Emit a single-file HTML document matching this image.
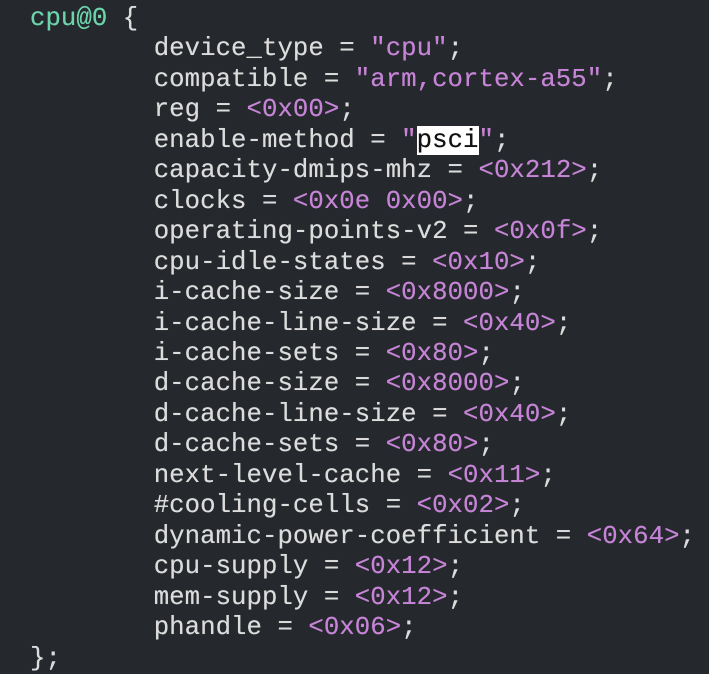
<!DOCTYPE html>
<html><head><meta charset="utf-8"><style>
html,body{margin:0;padding:0;background:#25282c;width:709px;height:673px;overflow:hidden}
pre{margin:0;position:absolute;left:30px;top:4px;font-family:"Liberation Mono","DejaVu Sans Mono",monospace;font-size:25.7px;line-height:30.45px;color:#dcdcdc;letter-spacing:0.05px;text-shadow:0 0 0.4px currentColor}
.g{color:#6dd3ab}.p{color:#c584d6}
.h{background:#fff;color:#111}
</style></head><body><pre><span class="g">cpu@0</span> {
        device_type = <span class="p">"cpu"</span>;
        compatible = <span class="p">"arm,cortex-a55"</span>;
        reg = <span class="p">&lt;0x00&gt;</span>;
        enable-method = <span class="p">"</span><span class="h">psci</span><span class="p">"</span>;
        capacity-dmips-mhz = <span class="p">&lt;0x212&gt;</span>;
        clocks = <span class="p">&lt;0x0e 0x00&gt;</span>;
        operating-points-v2 = <span class="p">&lt;0x0f&gt;</span>;
        cpu-idle-states = <span class="p">&lt;0x10&gt;</span>;
        i-cache-size = <span class="p">&lt;0x8000&gt;</span>;
        i-cache-line-size = <span class="p">&lt;0x40&gt;</span>;
        i-cache-sets = <span class="p">&lt;0x80&gt;</span>;
        d-cache-size = <span class="p">&lt;0x8000&gt;</span>;
        d-cache-line-size = <span class="p">&lt;0x40&gt;</span>;
        d-cache-sets = <span class="p">&lt;0x80&gt;</span>;
        next-level-cache = <span class="p">&lt;0x11&gt;</span>;
        #cooling-cells = <span class="p">&lt;0x02&gt;</span>;
        dynamic-power-coefficient = <span class="p">&lt;0x64&gt;</span>;
        cpu-supply = <span class="p">&lt;0x12&gt;</span>;
        mem-supply = <span class="p">&lt;0x12&gt;</span>;
        phandle = <span class="p">&lt;0x06&gt;</span>;
};</pre></body></html>
